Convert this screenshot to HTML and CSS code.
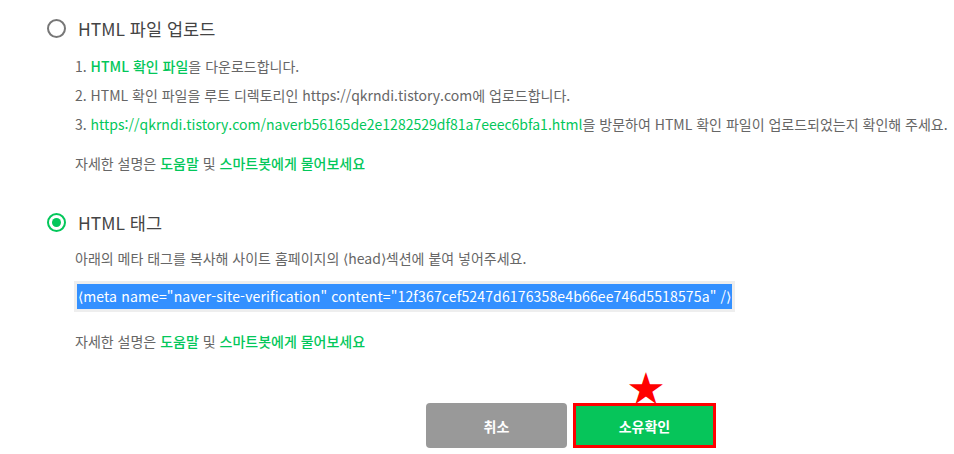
FILE: index.html
```html
<!DOCTYPE html>
<html lang="ko">
<head>
    <meta charset="UTF-8">
    <title>소유확인</title>
    <link rel="stylesheet" href="styles.css">
</head>
<body>
    <div class="option">
        <div class="option-title">
            <span class="radio"></span>
            <span>HTML 파일 업로드</span>
        </div>
        <div class="option-body">
            <p class="step">1. <a href="#" class="link strong">HTML 확인 파일</a>을 다운로드합니다.</p>
            <p class="step">2. HTML 확인 파일을 루트 디렉토리인 https://qkrndi.tistory.com에 업로드합니다.</p>
            <p class="step">3. <a href="#" class="link">https://qkrndi.tistory.com/naverb56165de2e1282529df81a7eeec6bfa1.html</a>을 방문하여 HTML 확인 파일이 업로드되었는지 확인해 주세요.</p>
            <p class="help">자세한 설명은 <a href="#" class="link strong">도움말</a> 및 <a href="#" class="link strong">스마트봇에게 물어보세요</a></p>
        </div>
    </div>

    <div class="option">
        <div class="option-title">
            <span class="radio checked"></span>
            <span>HTML 태그</span>
        </div>
        <div class="option-body">
            <p class="step">아래의 메타 태그를 복사해 사이트 홈페이지의 &lang;head&rang;섹션에 붙여 넣어주세요.</p>
            <div class="meta-box"><span class="selected">&lang;meta name="naver-site-verification" content="12f367cef5247d6176358e4b66ee746d5518575a" /&rang;</span></div>
            <p class="help">자세한 설명은 <a href="#" class="link strong">도움말</a> 및 <a href="#" class="link strong">스마트봇에게 물어보세요</a></p>
        </div>
    </div>

    <div class="buttons">
        <button class="btn cancel">취소</button>
        <div class="confirm-wrap">
            <span class="star">&#9733;</span>
            <button class="btn confirm">소유확인</button>
        </div>
    </div>
</body>
</html>
```
FILE: styles.css
```css
body {
    margin: 0;
    padding: 18px 0 0 47px;
    font-family: "Noto Sans CJK KR", "Noto Sans", sans-serif;
    color: #666;
    background: #fff;
}
p {
    margin: 0;
}
.option-title {
    display: flex;
    align-items: center;
    gap: 12px;
    height: 20px;
    font-size: 17.5px;
    color: #444;
}
.radio {
    width: 15px;
    height: 15px;
    border: 2px solid #777;
    border-radius: 50%;
    display: flex;
    align-items: center;
    justify-content: center;
}
.radio.checked {
    border-color: #03c75a;
}
.radio.checked::after {
    content: "";
    width: 9px;
    height: 9px;
    border-radius: 50%;
    background: #03c75a;
}
.option-body {
    padding: 14px 0 0 28px;
    font-size: 14px;
}
.step {
    line-height: 29px;
}
.link {
    color: #03c75a;
    text-decoration: none;
}
.link.strong {
    font-weight: 500;
}
.help {
    margin-top: 14px;
    line-height: 20px;
}
.option + .option {
    margin-top: 39px;
}
.option + .option .option-body {
    padding-top: 12px;
}
.meta-box {
    width: fit-content;
    margin: 8px 0 19px -1px;
    padding: 3px;
    background: #eee;
}
.selected {
    display: block;
    background: #3390ff;
    color: #fff;
    padding: 0 1px;
    line-height: 25px;
    letter-spacing: 0.15px;
}
.buttons {
    display: flex;
    gap: 6px;
    margin: 52px 0 0 379px;
    align-items: flex-end;
}
.btn {
    font-family: inherit;
    font-size: 14px;
    font-weight: bold;
    color: #fff;
    border: none;
    cursor: pointer;
}
.cancel {
    width: 141px;
    height: 45px;
    background: #999;
    border-radius: 4px;
}
.confirm-wrap {
    position: relative;
}
.star {
    position: absolute;
    left: 55px;
    top: -34px;
    color: #f00;
    font-size: 36px;
    line-height: 34px;
}
.confirm {
    width: 143px;
    height: 45px;
    background: #06c55a;
    border: 3px solid #f00;
}
```
